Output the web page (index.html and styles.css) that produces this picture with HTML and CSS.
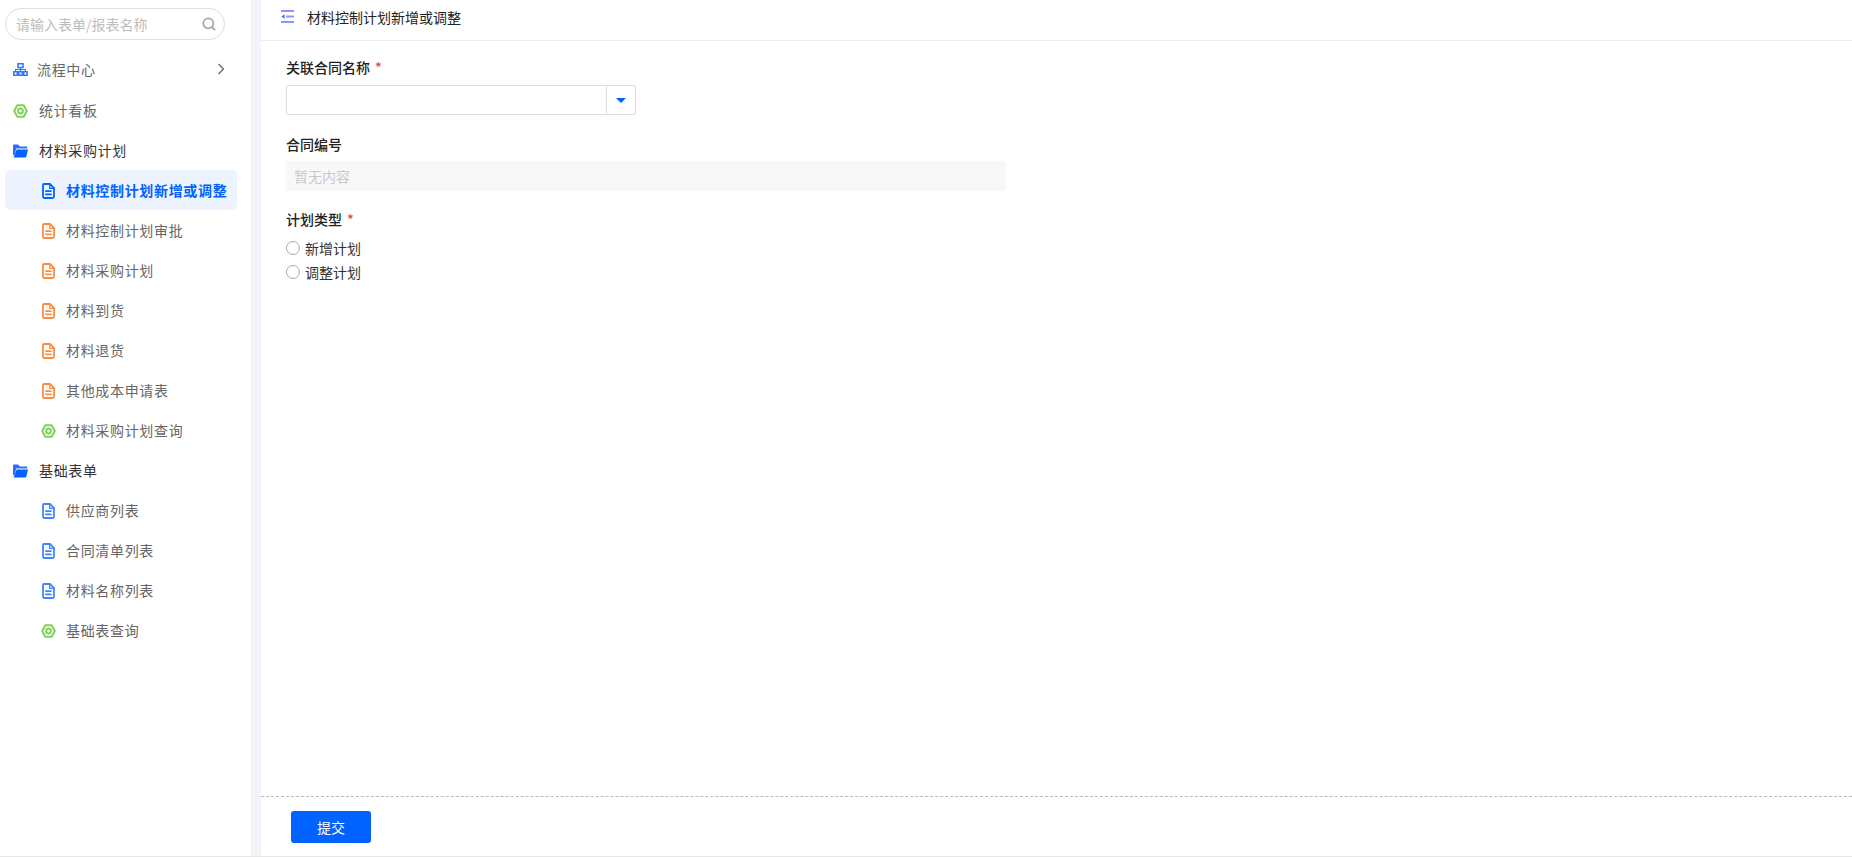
FILE: index.html
```html
<!DOCTYPE html>
<html lang="zh-CN">
<head>
    <meta charset="UTF-8">
    <title>材料控制计划新增或调整</title>
    <link rel="stylesheet" href="styles.css">
</head>
<body>
    <svg class="defs" width="0" height="0">
        <symbol id="i-doc" viewBox="0 0 13 16">
            <path d="M2 1h6l4 4.200v8.300c0 .9-.7 1.500-1.500 1.500H2.500C1.600 15 1 14.400 1 13.500V2c0-.6.400-1 1-1z" fill="none" stroke="currentColor" stroke-width="1.800"/>
            <path d="M7.800 1v4.300h4.400" fill="none" stroke="currentColor" stroke-width="1.300"/>
            <path d="M3.200 8.200h6.400M3.200 11.300h6.400" stroke="currentColor" stroke-width="1.700"/>
        </symbol>
        <symbol id="i-hex" viewBox="0 0 15 14">
            <path d="M4.300 1.200h6.400l3.100 5.800-3.100 5.800H4.300L1.200 7z" fill="none" stroke="currentColor" stroke-width="2" stroke-linejoin="round"/>
            <circle cx="7.500" cy="7" r="2.400" fill="none" stroke="currentColor" stroke-width="2"/>
        </symbol>
        <symbol id="i-folder" viewBox="0 0 15 13">
            <path d="M0 1.200C0 .5.500 0 1.200 0h4l1.600 2h6.400c.6 0 1 .4 1 1v1H3.200L1.800 10 0 11z" fill="#2f6df6"/>
            <path d="M3.600 5H15l-1.600 6.800c-.1.700-.6 1.200-1.300 1.200H.6z" fill="#0062ff"/>
        </symbol>
    </svg>

    <div class="page">
        <aside class="sidebar">
            <div class="search">
                <span class="search-text">请输入表单/报表名称</span>
                <svg class="search-icon" width="14" height="14" viewBox="0 0 14 14">
                    <circle cx="6.300" cy="6.300" r="5" fill="none" stroke="#a8a8a8" stroke-width="1.800"/>
                    <path d="M10 10l3 3" stroke="#a8a8a8" stroke-width="1.800"/>
                </svg>
            </div>
            <ul class="menu">
                <li class="item top first">
                    <svg class="icon org" width="15" height="13" viewBox="0 0 15 13">
                        <path d="M5 .8h5v3.700H5zM.9 8.700h3.400v3.500H.9zM5.800 8.700h3.400v3.500H5.800zM10.700 8.700h3.400v3.500h-3.400z" fill="none" stroke="#2f7bff" stroke-width="1.600"/>
                        <path d="M7.500 4.500v4M2.600 8.500V6.500h9.800v2" fill="none" stroke="#2f7bff" stroke-width="1.200"/>
                    </svg>
                    <span class="label">流程中心</span>
                    <svg class="arrow" width="8" height="12" viewBox="0 0 8 12"><path d="M1.500 1l5 5-5 5" fill="none" stroke="#666" stroke-width="1.300"/></svg>
                </li>
                <li class="item top"><svg class="icon green"><use href="#i-hex"/></svg><span class="label">统计看板</span></li>
                <li class="item top group"><svg class="icon"><use href="#i-folder"/></svg><span class="label">材料采购计划</span></li>
                <li class="item sub active"><svg class="doc blue"><use href="#i-doc"/></svg><span class="label">材料控制计划新增或调整</span></li>
                <li class="item sub"><svg class="doc orange"><use href="#i-doc"/></svg><span class="label">材料控制计划审批</span></li>
                <li class="item sub"><svg class="doc orange"><use href="#i-doc"/></svg><span class="label">材料采购计划</span></li>
                <li class="item sub"><svg class="doc orange"><use href="#i-doc"/></svg><span class="label">材料到货</span></li>
                <li class="item sub"><svg class="doc orange"><use href="#i-doc"/></svg><span class="label">材料退货</span></li>
                <li class="item sub"><svg class="doc orange"><use href="#i-doc"/></svg><span class="label">其他成本申请表</span></li>
                <li class="item sub"><svg class="doc hex green"><use href="#i-hex"/></svg><span class="label">材料采购计划查询</span></li>
                <li class="item top group"><svg class="icon"><use href="#i-folder"/></svg><span class="label">基础表单</span></li>
                <li class="item sub"><svg class="doc blue"><use href="#i-doc"/></svg><span class="label">供应商列表</span></li>
                <li class="item sub"><svg class="doc blue"><use href="#i-doc"/></svg><span class="label">合同清单列表</span></li>
                <li class="item sub"><svg class="doc blue"><use href="#i-doc"/></svg><span class="label">材料名称列表</span></li>
                <li class="item sub"><svg class="doc hex green"><use href="#i-hex"/></svg><span class="label">基础表查询</span></li>
            </ul>
        </aside>

        <main class="main">
            <header class="header">
                <svg class="fold" width="13" height="13" viewBox="0 0 13 13">
                    <path d="M0 1h13M5 6.500h8M0 12h13" stroke="#8f93ff" stroke-width="1.800"/>
                    <path d="M3.600 4.200v4.600L.4 6.500z" fill="#4d6bff"/>
                </svg>
                <span class="title">材料控制计划新增或调整</span>
            </header>

            <form class="form">
                <div class="field">
                    <div class="field-label">关联合同名称<span class="required">*</span></div>
                    <div class="select">
                        <div class="select-value"></div>
                        <div class="select-btn"><span class="caret"></span></div>
                    </div>
                </div>
                <div class="field">
                    <div class="field-label">合同编号</div>
                    <div class="readonly">暂无内容</div>
                </div>
                <div class="field">
                    <div class="field-label">计划类型<span class="required">*</span></div>
                    <div class="radios">
                        <div class="radio"><span class="circle"></span>新增计划</div>
                        <div class="radio"><span class="circle"></span>调整计划</div>
                    </div>
                </div>
            </form>

            <footer class="footer">
                <button class="submit" type="button">提交</button>
            </footer>
        </main>
    </div>
</body>
</html>
```

FILE: styles.css
```css
* {
    margin: 0;
    padding: 0;
    box-sizing: border-box;
}

html, body {
    height: 100%;
    overflow: hidden;
}

body {
    font-family: "Noto Sans CJK SC", "Noto Sans", sans-serif;
    font-size: 14px;
    color: #333;
    background: #fff;
}

.defs {
    position: absolute;
}

.page {
    display: flex;
    height: 857px;
    border-bottom: 1px solid #e8e8e8;
}

/* 左侧菜单 */
.sidebar {
    width: 261px;
    flex: none;
    padding: 8px 14px 0 5px;
    border-right: 10px solid #f3f4f9;
}

.search {
    display: flex;
    align-items: center;
    justify-content: space-between;
    height: 32px;
    margin-right: 12px;
    padding: 0 8px 0 10px;
    border: 1px solid #dedede;
    border-radius: 16px;
}

.search-text {
    font-size: 14px;
    color: #bdbdbd;
}

.menu {
    list-style: none;
    margin-top: 10px;
}

.item {
    display: flex;
    align-items: center;
    height: 40px;
    color: #666;
    letter-spacing: 0.67px;
    white-space: nowrap;
}

.item.first {
    padding-bottom: 2px;
}

.item.top {
    padding-left: 8px;
}

.item.group {
    color: #333;
}

.item.sub {
    padding-left: 37px;
}

.item.active {
    font-weight: 700;
    color: #0062ff;
    background: #edf4ff;
    border-radius: 5px;
}

.icon {
    width: 15px;
    height: 14px;
    margin-top: 1px;
    margin-right: 11px;
    flex: none;
}

.icon.org {
    height: 13px;
    margin-right: 9px;
}

.doc {
    width: 13px;
    height: 16px;
    margin-top: 1px;
    margin-right: 11px;
    flex: none;
}

.doc.hex {
    width: 15px;
    height: 14px;
    margin-left: -1px;
    margin-right: 10px;
}

.blue { color: #3a86ff; }
.active .blue { color: #0062ff; }
.orange { color: #ff8a3d; }
.green { color: #7ed356; }

.arrow {
    margin-left: auto;
    margin-right: 12px;
}

/* 右侧内容 */
.main {
    flex: 1;
    display: flex;
    flex-direction: column;
}

.header {
    display: flex;
    align-items: center;
    height: 41px;
    padding: 0 0 0 20px;
    border-bottom: 1px solid #eee;
    flex: none;
}

.fold {
    margin-right: 13px;
    margin-top: -7px;
}

.title {
    color: #222;
    margin-top: -6px;
}

.form {
    flex: 1;
    padding: 15px 0 0 25px;
}

.field {
    margin-bottom: 15px;
}

.field + .field {
    margin-top: 18px;
}

.field:last-child {
    margin-top: 17px;
}

.field-label {
    height: 22px;
    line-height: 22px;
    margin-bottom: 6px;
    font-weight: 500;
    color: #222;
}

.field:first-child .field-label {
    margin-bottom: 7px;
}

.required {
    margin-left: 5px;
    color: #e5484d;
}

.select {
    display: flex;
    width: 350px;
    height: 30px;
    border: 1px solid #ddd;
    border-radius: 2px;
}

.select-value {
    flex: 1;
}

.select-btn {
    display: flex;
    align-items: center;
    justify-content: center;
    width: 29px;
    border-left: 1px solid #ddd;
}

.caret {
    width: 0;
    height: 0;
    border-left: 5px solid transparent;
    border-right: 5px solid transparent;
    border-top: 5px solid #0062ff;
}

.readonly {
    width: 720px;
    height: 30px;
    line-height: 30px;
    padding-left: 8px;
    background: #f8f8f8;
    color: #c8c8d0;
}

.radio {
    display: flex;
    align-items: center;
    height: 24px;
    color: #333;
}

.circle {
    width: 14px;
    height: 14px;
    margin-right: 5px;
    border: 1px solid #a9a9b8;
    border-radius: 50%;
}

.footer {
    height: 60px;
    padding: 14px 0 0 30px;
    border-top: 1px dashed #bbb;
    flex: none;
}

.submit {
    width: 80px;
    height: 32px;
    border: none;
    border-radius: 3px;
    background: #0062ff;
    color: #fff;
    font-family: inherit;
    font-size: 14px;
}
```
